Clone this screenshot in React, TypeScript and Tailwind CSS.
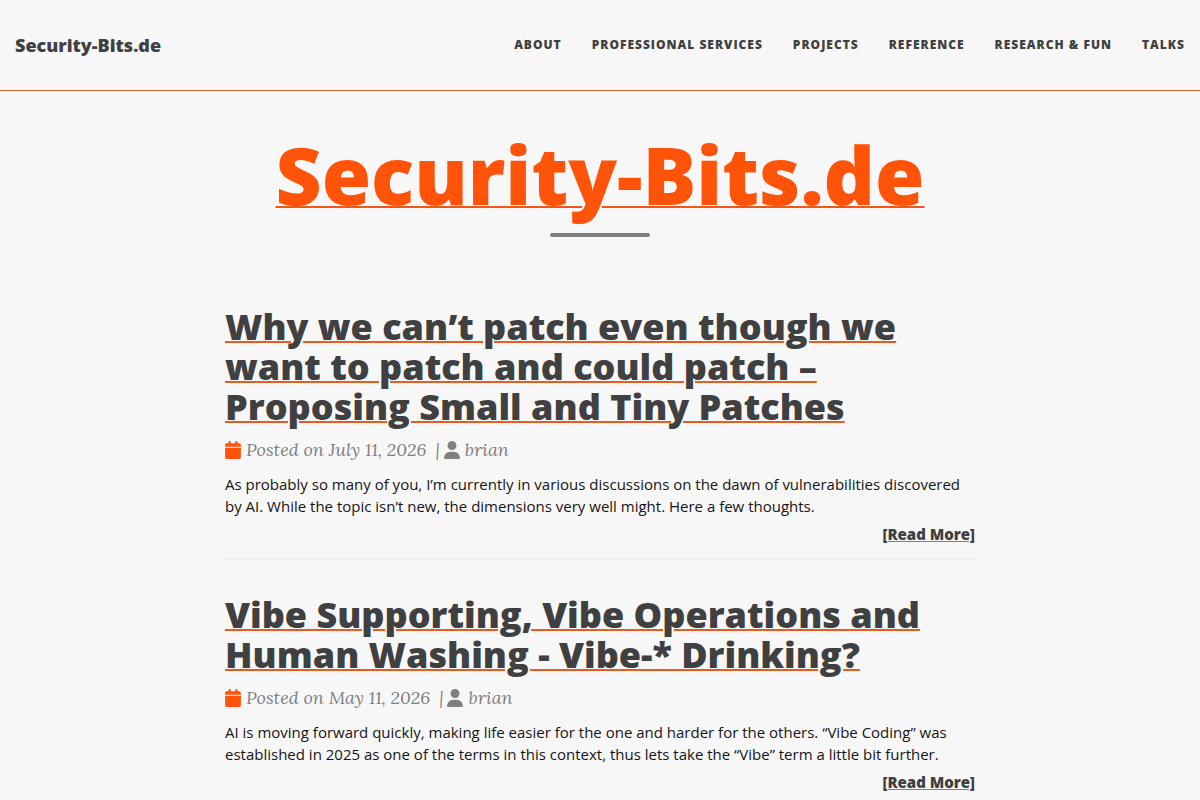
import React from "react";
import { FaCalendar, FaUser } from "react-icons/fa6";

interface PostType {
  title: string;
  date: string;
  author: string;
  summary: string;
}

const navItems = [
  "About",
  "Professional Services",
  "Projects",
  "Reference",
  "Research & Fun",
  "Talks",
];

const posts: PostType[] = [
  {
    title:
      "Why we can’t patch even though we want to patch and could patch – Proposing Small and Tiny Patches",
    date: "July 11, 2026",
    author: "brian",
    summary:
      "As probably so many of you, I’m currently in various discussions on the dawn of vulnerabilities discovered by AI. While the topic isn’t new, the dimensions very well might. Here a few thoughts.",
  },
  {
    title: "Vibe Supporting, Vibe Operations and Human Washing - Vibe-* Drinking?",
    date: "May 11, 2026",
    author: "brian",
    summary:
      "AI is moving forward quickly, making life easier for the one and harder for the others. “Vibe Coding” was established in 2025 as one of the terms in this context, thus lets take the “Vibe” term a little bit further.",
  },
];

const Navbar = () => {
  return (
    <nav className="min-h-[91px] px-[15px] flex flex-wrap items-center justify-between border-b border-[#d0622f] font-extrabold text-[#404040]">
      <a href="#home" className="text-lg">
        Security-Bits.de
      </a>
      <ul className="flex flex-wrap gap-x-[30px] text-xs uppercase tracking-[1px]">
        {navItems.map((item) => (
          <li key={item}>
            <a href="#nav">{item}</a>
          </li>
        ))}
      </ul>
    </nav>
  );
};

const PostPreview = ({ title, date, author, summary }: PostType) => {
  return (
    <article className="pt-[35px] pb-3 border-b-2 border-[#f0f0f0]">
      <a href="#post">
        <h2 className="text-4xl leading-[40px] font-extrabold text-[#404040] underline decoration-2 underline-offset-1 decoration-[#e85c20]">
          {title}
        </h2>
      </a>

      {/* Date and author */}
      <p className="mt-[7px] flex items-center text-lg leading-8 italic text-[#808080] font-['Lora','Liberation_Serif',serif]">
        <FaCalendar className="mr-[5px] w-4 h-[18px] text-[#ff530a]" />
        <span>Posted on {date}</span>
        <span className="ml-[9px] mr-1">|</span>
        <FaUser className="mr-[5px] w-4 h-[18px]" />
        <span>{author}</span>
      </p>

      <p className="mt-[7px] text-[15px] leading-[22px] text-[#151515]">{summary}</p>
      <div className="mt-[5px] text-right text-[15px] leading-6 font-extrabold text-[#404040]">
        <a href="#post" className="underline decoration-1 underline-offset-1 decoration-[#e85c20]">
          [Read More]
        </a>
      </div>
    </article>
  );
};

const App = () => {
  return (
    <div className="min-h-screen bg-[#f7f7f7] font-['Open_Sans',sans-serif]">
      <Navbar />

      <header className="pt-[39px] px-[15px] text-center">
        <h1 className="text-[80px] leading-[88px] font-extrabold text-[#ff530a]">
          <a href="#home" className="underline decoration-2 underline-offset-1 decoration-[#f0581a]">
            Security-Bits.de
          </a>
        </h1>
        <hr className="mt-[15px] mx-auto w-[100px] h-1 border-0 rounded-sm bg-[#808080]" />
      </header>

      <main className="mt-[35px] mx-auto max-w-[780px] px-[15px]">
        {posts.map((post) => (
          <PostPreview key={post.title} {...post} />
        ))}
      </main>
    </div>
  );
};

export default App;
